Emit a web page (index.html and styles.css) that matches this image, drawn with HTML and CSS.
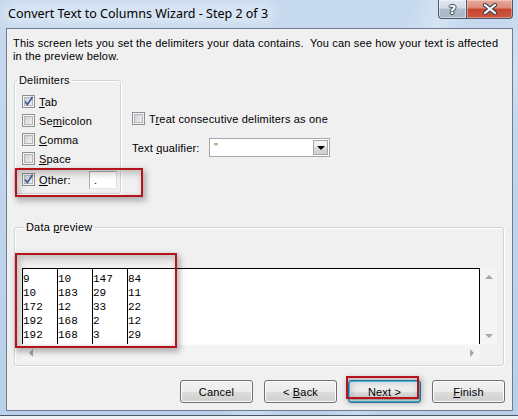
FILE: index.html
```html
<!DOCTYPE html>
<html>
<head>
<meta charset="utf-8">
<title>Convert Text to Columns Wizard</title>
<link rel="stylesheet" href="styles.css">
</head>
<body>
<svg class="defs" width="0" height="0" aria-hidden="true">
  <defs>
    <linearGradient id="cbg" x1="0" y1="0" x2="1" y2="1">
      <stop offset="0" stop-color="#c9cdd2"/>
      <stop offset="1" stop-color="#f3f3f3"/>
    </linearGradient>
  </defs>
</svg>
<div class="window">
  <div class="titlebar">
    <div class="title">Convert Text to Columns Wizard - Step 2 of 3</div>
    <div class="caption">
      <div class="cap cap-help">?</div>
      <div class="cap cap-close">
        <svg width="16" height="12" viewBox="0 0 16 12">
          <path d="M3 2 L13 10 M13 2 L3 10" stroke="#3b4756" stroke-width="4.2" stroke-linecap="round" fill="none"/>
          <path d="M3 2 L13 10 M13 2 L3 10" stroke="#ffffff" stroke-width="2.2" stroke-linecap="round" fill="none"/>
        </svg>
      </div>
    </div>
  </div>
  <div class="client">
    <p class="intro">This screen lets you set the delimiters your data contains.&nbsp; You can see how your text is affected<br>in the preview below.</p>
    <div class="options">
      <fieldset class="group delims">
        <legend>Delimiters</legend>
        <div class="chk-row">
          <svg class="cb" width="13" height="13" viewBox="0 0 13 13"><rect x="0.5" y="0.5" width="12" height="12" fill="#f4f4f4" stroke="#8e8f8f"/><rect x="2.5" y="2.5" width="8" height="8" fill="url(#cbg)" stroke="#b3b7bc"/><path d="M3.2 6.4 L5.4 9.6 L10.6 1.8" stroke="#3f5b9a" stroke-width="1.7" fill="none"/></svg>
          <span><u>T</u>ab</span>
        </div>
        <div class="chk-row">
          <svg class="cb" width="13" height="13" viewBox="0 0 13 13"><rect x="0.5" y="0.5" width="12" height="12" fill="#f4f4f4" stroke="#8e8f8f"/><rect x="2.5" y="2.5" width="8" height="8" fill="url(#cbg)" stroke="#b3b7bc"/></svg>
          <span>Se<u>m</u>icolon</span>
        </div>
        <div class="chk-row">
          <svg class="cb" width="13" height="13" viewBox="0 0 13 13"><rect x="0.5" y="0.5" width="12" height="12" fill="#f4f4f4" stroke="#8e8f8f"/><rect x="2.5" y="2.5" width="8" height="8" fill="url(#cbg)" stroke="#b3b7bc"/></svg>
          <span><u>C</u>omma</span>
        </div>
        <div class="chk-row">
          <svg class="cb" width="13" height="13" viewBox="0 0 13 13"><rect x="0.5" y="0.5" width="12" height="12" fill="#f4f4f4" stroke="#8e8f8f"/><rect x="2.5" y="2.5" width="8" height="8" fill="url(#cbg)" stroke="#b3b7bc"/></svg>
          <span><u>S</u>pace</span>
        </div>
        <div class="chk-row other-row">
          <svg class="cb" width="13" height="13" viewBox="0 0 13 13"><rect x="0.5" y="0.5" width="12" height="12" fill="#f4f4f4" stroke="#8e8f8f"/><rect x="2.5" y="2.5" width="8" height="8" fill="url(#cbg)" stroke="#b3b7bc"/><path d="M3.2 6.4 L5.4 9.6 L10.6 1.8" stroke="#3f5b9a" stroke-width="1.7" fill="none"/></svg>
          <span class="other-label"><u>O</u>ther:</span>
          <div class="textbox">.</div>
        </div>
      </fieldset>
      <div class="side">
        <div class="chk-row">
          <svg class="cb" width="13" height="13" viewBox="0 0 13 13"><rect x="0.5" y="0.5" width="12" height="12" fill="#f4f4f4" stroke="#8e8f8f"/><rect x="2.5" y="2.5" width="8" height="8" fill="url(#cbg)" stroke="#b3b7bc"/></svg>
          <span>T<u>r</u>eat consecutive delimiters as one</span>
        </div>
        <div class="qual-row">
          <span class="qual-label">Text <u>q</u>ualifier:</span>
          <div class="combo">
            <span class="combo-val">"</span>
            <span class="dd"><span class="dd-tri"></span></span>
          </div>
        </div>
      </div>
    </div>
    <fieldset class="group preview-group">
      <legend>Data <u>p</u>review</legend>
      <div class="preview">
        <div class="sheet">
          <div class="col">9<br>10<br>172<br>192<br>192</div>
          <div class="col">10<br>183<br>12<br>168<br>168</div>
          <div class="col">147<br>29<br>33<br>2<br>3</div>
          <div class="col">84<br>11<br>22<br>12<br>29</div>
        </div>
        <div class="vscroll"><span class="arrbox"><span class="arr arr-up"></span></span><span class="arrbox"><span class="arr arr-down"></span></span></div>
        <div class="hscroll"><span class="arrbox"><span class="arr arr-left"></span></span><span class="arrbox"><span class="arr arr-right"></span></span></div>
        <div class="corner"></div>
      </div>
    </fieldset>
    <div class="buttons">
      <button class="btn">Cancel</button>
      <button class="btn">&lt; <u>B</u>ack</button>
      <button class="btn btn-default"><u>N</u>ext &gt;</button>
      <button class="btn"><u>F</u>inish</button>
    </div>
    <div class="mark mark-other"></div>
    <div class="mark mark-preview"></div>
    <div class="mark mark-next"></div>
  </div>
</div>
</body>
</html>
```
FILE: styles.css
```css
* { box-sizing: border-box; }
html, body { margin: 0; padding: 0; }
body {
  width: 518px;
  height: 419px;
  overflow: hidden;
  background: #eef0f2;
  font-family: "Liberation Sans", Arial, sans-serif;
  font-size: 11px;
  color: #000;
}
.defs { display: block; width: 0; height: 0; overflow: hidden; }

.window {
  width: 518px;
  height: 416px;
  display: flex;
  flex-direction: column;
  padding: 0 5px 4px 6px;
  border-bottom: 1px solid #4b5666;
  background:
    linear-gradient(115deg, rgba(255,255,255,0) 58%, rgba(255,255,255,.28) 63%, rgba(255,255,255,0) 67%, rgba(255,255,255,0) 72%, rgba(255,255,255,.22) 77%, rgba(255,255,255,0) 81%),
    linear-gradient(#c6d9ee, #b9d0ea);
}

/* Title bar */
.titlebar {
  height: 28px;
  display: flex;
  align-items: flex-start;
}
.title {
  margin: 6px 0 0 1px;
  padding: 0 4px 0 1px;
  font-family: "Noto Sans", "Liberation Sans", sans-serif;
  font-size: 12.5px;
  line-height: 15px;
  color: #000;
  background: rgba(255,255,255,.28);
  border-radius: 8px;
  box-shadow: 0 0 8px 5px rgba(255,255,255,.28);
}
.caption {
  margin-left: auto;
  display: flex;
  height: 19px;
}
.cap {
  height: 19px;
  border: 1px solid #4c5a6c;
  border-top: 0;
  display: flex;
  align-items: center;
  justify-content: center;
}
.cap-help {
  width: 28px;
  border-right: 0;
  border-bottom-left-radius: 4px;
  background: linear-gradient(#e0e7ef 0%, #d2dce7 45%, #b0bdcc 50%, #a7b6c7 100%);
  box-shadow: inset 0 0 0 1px rgba(255,255,255,.45);
  color: #fff;
  font-family: "DejaVu Sans", sans-serif;
  font-weight: bold;
  font-size: 13px;
  text-shadow: 0 0 1px #3b4756, 1px 0 0 #3b4756, -1px 0 0 #3b4756, 0 1px 0 #3b4756, 0 -1px 0 #3b4756;
}
.cap-close {
  width: 47px;
  border-bottom-right-radius: 4px;
  background: linear-gradient(#e9a99c 0%, #dc8a78 45%, #c7452f 50%, #d0553a 100%);
  box-shadow: inset 0 0 0 1px rgba(255,255,255,.35);
}

/* Client area */
.client {
  position: relative;
  flex: 1;
  background: #f0f0f0;
  border: 1px solid #6f7c8c;
  display: flex;
  flex-direction: column;
  align-items: flex-start;
  letter-spacing: 0.18px;
}
.intro {
  margin: 8px 0 0 6px;
  line-height: 13px;
  white-space: nowrap;
}

.group {
  margin: 0;
  border: 1px solid #d0d4d8;
  border-radius: 3px;
  box-shadow: inset 1px 1px 0 #fff, 1px 1px 0 #fff;
}
.group legend {
  margin-left: 2px;
  padding: 0 2px;
  line-height: 13px;
}

.options {
  margin-top: 11px;
  display: flex;
  align-items: flex-start;
}
.delims {
  width: 107px;
  margin-left: 7px;
  padding: 5px 0 4px 0;
}
.chk-row {
  height: 19px;
  display: flex;
  align-items: center;
  gap: 4px;
  white-space: nowrap;
}
.delims .chk-row { padding-left: 7px; }
.cb { flex: none; display: block; }
.other-row { margin-top: 2px; }
.other-label { width: 46px; }
.textbox {
  width: 28px;
  height: 18px;
  background: #fff;
  border: 1px solid #abadb3;
  border-right-color: #dbdfe6;
  border-bottom-color: #e3e9ef;
  padding: 2px 0 0 4px;
  line-height: 13px;
}

.side {
  margin-left: 11px;
  padding-top: 35px;
}
.qual-row {
  margin-top: 10px;
  display: flex;
  align-items: center;
  height: 19px;
}
.qual-label { width: 77px; white-space: nowrap; }
.combo {
  width: 121px;
  height: 19px;
  background: #fff;
  border: 1px solid #a5a7ab;
  display: flex;
  align-items: flex-start;
  padding: 1px;
}
.combo-val {
  margin: 1px 0 0 3px;
  line-height: 13px;
  color: #a05a10;
}
.dd {
  margin-left: auto;
  width: 15px;
  height: 15px;
  border: 1px solid #a8a8a8;
  background: linear-gradient(#f4f4f4 0%, #ececec 50%, #dcdcdc 50%, #cfcfcf 100%);
  display: flex;
  align-items: center;
  justify-content: center;
}
.dd-tri {
  width: 0;
  height: 0;
  border-left: 4px solid transparent;
  border-right: 4px solid transparent;
  border-top: 4px solid #000;
  margin-top: 1px;
}

/* Preview */
.preview-group {
  width: 490px;
  margin-left: 7px;
  margin-top: 27px;
  padding: 34px 6px 4px 7px;
}
.preview {
  display: grid;
  grid-template-columns: 458px 17px;
  grid-template-rows: 76px 17px;
}
.sheet {
  background: #fff;
  border-top: 1px solid #000;
  border-right: 1px solid #000;
  display: flex;
  align-items: stretch;
}
.col {
  width: 35px;
  border-left: 1px solid #000;
  padding-top: 3px;
  font-family: "Liberation Mono", "Courier New", monospace;
  font-size: 11px;
  line-height: 14px;
  letter-spacing: 0;
  color: #000;
}
.vscroll, .hscroll {
  background: #f4f4f4;
  display: flex;
  justify-content: space-between;
}
.vscroll { flex-direction: column; }
.hscroll { border-top: 1px solid #fafafa; }
.corner { background: #f0f0f0; }
.arrbox {
  width: 17px;
  height: 17px;
  display: flex;
  align-items: center;
  justify-content: center;
}
.hscroll .arrbox { height: 16px; }
.arr { width: 0; height: 0; }
.arr-up { border-left: 4px solid transparent; border-right: 4px solid transparent; border-bottom: 4px solid #a6a6a6; }
.arr-down { border-left: 4px solid transparent; border-right: 4px solid transparent; border-top: 4px solid #a6a6a6; }
.arr-left { border-top: 4px solid transparent; border-bottom: 4px solid transparent; border-right: 4px solid #a6a6a6; }
.arr-right { border-top: 4px solid transparent; border-bottom: 4px solid transparent; border-left: 4px solid #a6a6a6; }

/* Buttons */
.buttons {
  align-self: stretch;
  margin-top: 14px;
  padding-right: 7px;
  display: flex;
  justify-content: flex-end;
  gap: 11px;
}
.btn {
  width: 73px;
  height: 23px;
  padding: 0;
  font-family: "Liberation Sans", Arial, sans-serif;
  font-size: 11px;
  letter-spacing: 0.18px;
  color: #000;
  border: 1px solid #707070;
  border-radius: 3px;
  background: linear-gradient(#f2f2f2 0%, #ebebeb 50%, #dddddd 50%, #cfcfcf 100%);
  box-shadow: inset 0 0 0 1px #fbfbfb;
}
.btn-default {
  border-color: #3c7fb1;
  box-shadow: inset 0 0 0 1px #48d0f4, inset 0 0 0 2px #e8f6fb;
}

/* Red annotation frames */
.mark {
  position: absolute;
  border: 2px solid #b5141c;
  box-shadow: 2px 3px 6px 1px rgba(0,0,0,.28), inset 2px 3px 6px 1px rgba(0,0,0,.2);
  pointer-events: none;
}
.mark-other { left: 8px; top: 139px; width: 128px; height: 29px; }
.mark-preview { left: 8px; top: 224px; width: 162px; height: 95px; }
.mark-next { left: 339px; top: 347px; width: 73px; height: 23px; }
```
